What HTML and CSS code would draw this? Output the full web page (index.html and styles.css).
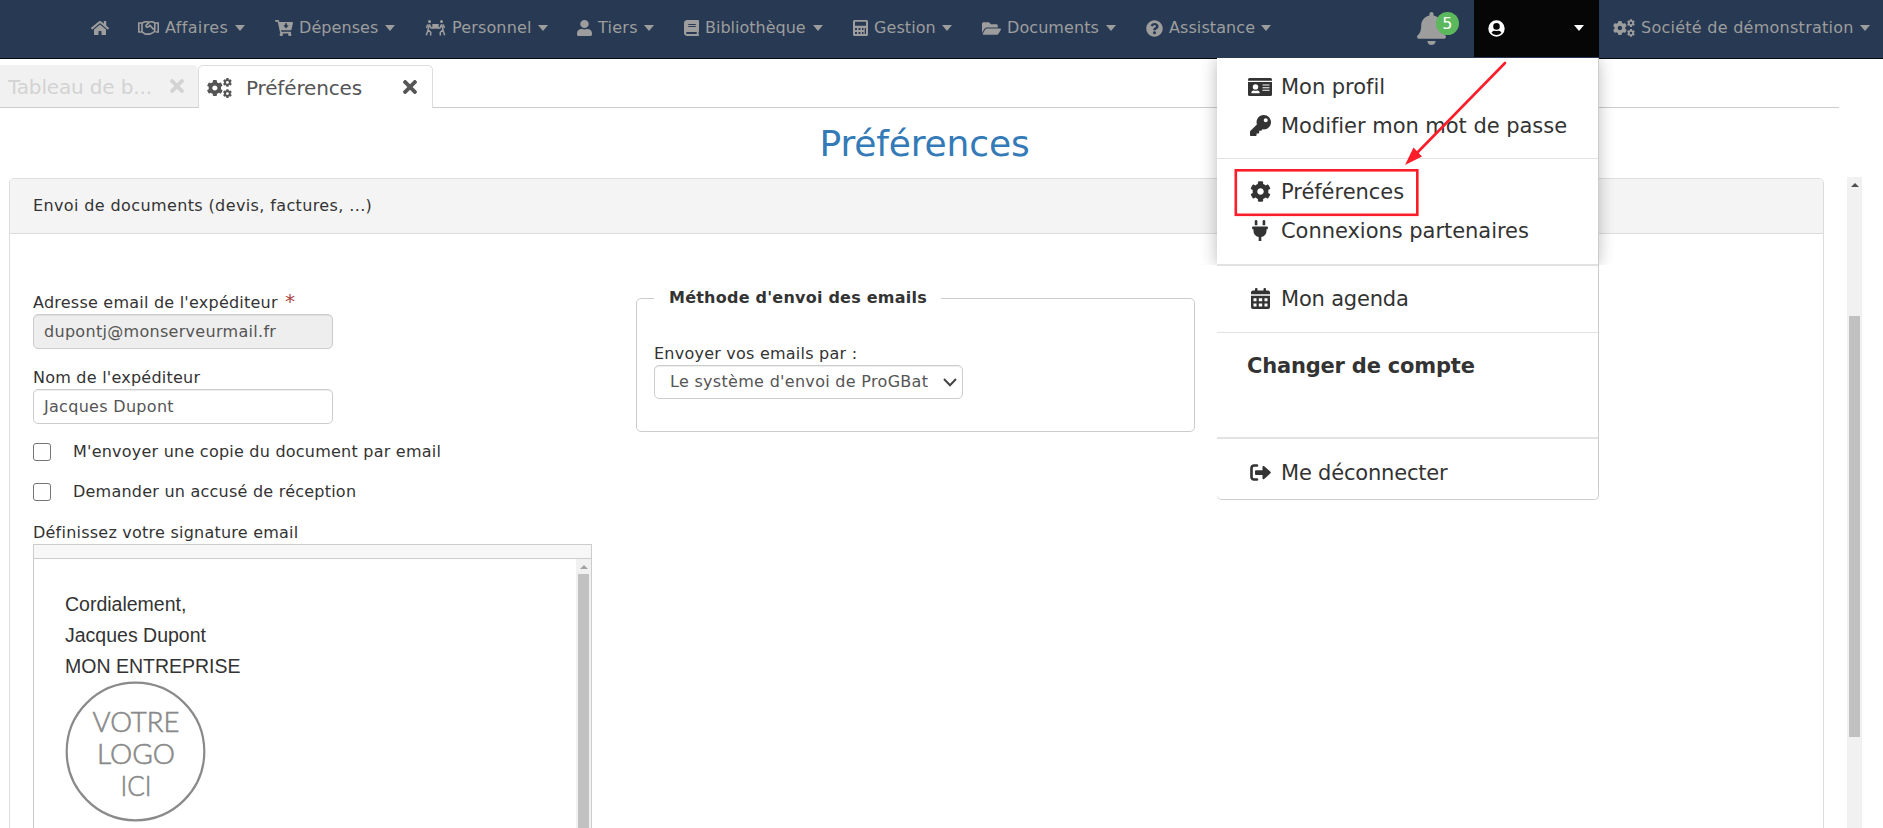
FILE: index.html
```html
<!DOCTYPE html>
<html lang="fr">
<head>
<meta charset="utf-8">
<title>Préférences</title>
<link rel="stylesheet" href="styles.css">
</head>
<body>
<svg class="sprite" width="0" height="0">
  <symbol id="cog" viewBox="0 0 512 512"><path d="M487.4 315.7l-42.6-24.6c4.3-23.2 4.3-47 0-70.2l42.6-24.6c4.9-2.8 7.1-8.6 5.5-14-11.1-35.6-30-67.8-54.7-94.6-3.8-4.1-10-5.1-14.8-2.3L380.8 110c-17.9-15.4-38.5-27.3-60.8-35.1V25.8c0-5.6-3.9-10.5-9.4-11.7-36.7-8.2-74.3-7.8-109.2 0-5.5 1.2-9.4 6.1-9.4 11.7V75c-22.2 7.9-42.8 19.8-60.8 35.1L88.7 85.5c-4.9-2.8-11-1.9-14.8 2.3-24.7 26.7-43.6 58.9-54.7 94.6-1.7 5.4.6 11.2 5.5 14L67.3 221c-4.3 23.2-4.3 47 0 70.2l-42.6 24.6c-4.9 2.8-7.1 8.6-5.5 14 11.1 35.6 30 67.8 54.7 94.6 3.8 4.1 10 5.1 14.8 2.3l42.6-24.6c17.9 15.4 38.5 27.3 60.8 35.1v49.2c0 5.6 3.9 10.5 9.4 11.7 36.7 8.2 74.3 7.8 109.2 0 5.5-1.2 9.4-6.1 9.4-11.7v-49.2c22.2-7.9 42.8-19.8 60.8-35.1l42.6 24.6c4.9 2.8 11 1.9 14.8-2.3 24.7-26.7 43.6-58.9 54.7-94.6 1.5-5.5-.7-11.3-5.6-14.1zM256 336c-44.1 0-80-35.9-80-80s35.9-80 80-80 80 35.9 80 80-35.9 80-80 80z"/></symbol>
  <symbol id="cogs" viewBox="0 0 640 512"><use href="#cog" x="-10" y="45" width="422" height="422"/><use href="#cog" x="405" y="-5" width="235" height="235"/><use href="#cog" x="405" y="282" width="235" height="235"/></symbol>
  <symbol id="times" viewBox="0 80 352 352"><path d="M242.72 256l100.07-100.07c12.28-12.28 12.28-32.19 0-44.48l-22.24-22.24c-12.28-12.28-32.19-12.28-44.48 0L176 189.28 75.93 89.21c-12.28-12.28-32.19-12.28-44.48 0L9.21 111.45c-12.28 12.28-12.28 32.19 0 44.48L109.28 256 9.21 356.07c-12.28 12.28-12.28 32.19 0 44.48l22.24 22.24c12.28 12.28 32.2 12.28 44.48 0L176 322.72l100.07 100.07c12.28 12.28 32.2 12.28 44.48 0l22.24-22.24c12.28-12.28 12.28-32.19 0-44.48L242.72 256z"/></symbol>
</svg>

<header class="navbar">
  <nav class="nav-main">
    <a class="nav-home"><svg width="18" height="16" viewBox="0 0 576 512"><path d="M280.37 148.26L96 300.11V464a16 16 0 0 0 16 16l112.06-.29a16 16 0 0 0 15.92-16V368a16 16 0 0 1 16-16h64a16 16 0 0 1 16 16v95.64a16 16 0 0 0 16 16.05L464 480a16 16 0 0 0 16-16V300L295.67 148.26a12.19 12.19 0 0 0-15.3 0zM571.6 251.47L488 182.56V44.05a12 12 0 0 0-12-12h-56a12 12 0 0 0-12 12v72.61L318.47 43a48 48 0 0 0-61 0L4.34 251.47a12 12 0 0 0-1.6 16.9l25.5 31A12 12 0 0 0 45.15 301l235.22-193.74a12.19 12.19 0 0 1 15.3 0L530.9 301a12 12 0 0 0 16.9-1.6l25.5-31a12 12 0 0 0-1.7-16.93z"/></svg></a>
    <a class="nav-item w-affaires"><svg width="21" height="16" viewBox="0 0 21 16" class="line"><path d="M4.200 3H.8v9h2.600M16.800 3h3.400v9h-2.600M4.200 3L6.800 1.800h2.800l1.200.7 1.600-.7h2.200L16.800 3v8.200M4 3.200v8.600l3.400 2.300h4.200l3-1.200 2.400-1.700M10.800 2.600L8 5.400c-.3 1.700 1.200 2.300 2.600 1.200l1.400-1.200 3.800 4.200"/></svg><span>Affaires</span><i class="caret"></i></a>
    <a class="nav-item w-depenses"><svg width="18" height="16" viewBox="0 0 18 16"><path fill-rule="evenodd" d="M.7 0h2.600c.4 0 .7.300.8.700L4.300 2H17.200c.6 0 .9.500.8 1l-1.500 6.500c-.1.400-.4.700-.8.700H6l.3 1.500h9c.6 0 .9.500.7 1l-.2.700a1.600 1.600 0 1 1-2.200.2H7.500a1.600 1.600 0 1 1-2.200-.2L2.700 1.700H.7C.3 1.700 0 1.400 0 1V.7C0 .3.3 0 .7 0zM10.100 3.300v2H8.300L11 8.500l2.700-3.200h-1.800v-2z"/></svg><span>Dépenses</span><i class="caret"></i></a>
    <a class="nav-item w-personnel"><svg width="21" height="16" viewBox="0 0 20 16"><circle cx="4" cy="1.500" r="1.500"/><circle cx="16" cy="1.500" r="1.500"/><path d="M6.800 4h6.400v4.700H6.800z"/><path class="limb" d="M4 4.300L2.500 9.700l2.700 2.600V15.500M2.600 10L.8 15.300M2.200 4.500L1 8M4 4.500l1.600 3.500h2M16 4.300l1.500 5.400-2.700 2.600V15.500M17.400 10l1.800 5.300M17.800 4.500L19 8M16 4.500l-1.600 3.500h-2"/></svg><span>Personnel</span><i class="caret"></i></a>
    <a class="nav-item w-tiers"><svg width="15" height="16" viewBox="0 0 448 512" preserveAspectRatio="none"><path d="M224 256c70.700 0 128-57.300 128-128S294.700 0 224 0 96 57.300 96 128s57.300 128 128 128zm89.600 32h-16.700c-22.200 10.200-46.900 16-72.900 16s-50.600-5.800-72.900-16h-16.700C60.200 288 0 348.200 0 422.400V464c0 26.500 21.500 48 48 48h352c26.500 0 48-21.500 48-48v-41.600c0-74.200-60.200-134.400-134.400-134.400z"/></svg><span>Tiers</span><i class="caret"></i></a>
    <a class="nav-item w-biblio"><svg width="15" height="16" viewBox="0 0 448 512" preserveAspectRatio="none"><path d="M448 360V24c0-13.300-10.700-24-24-24H96C43 0 0 43 0 96v320c0 53 43 96 96 96h328c13.300 0 24-10.700 24-24v-16c0-7.500-3.500-14.300-8.900-18.700-4.200-15.400-4.200-59.300 0-74.700 5.400-4.300 8.900-11.100 8.900-18.600zM128 134c0-3.300 2.700-6 6-6h212c3.300 0 6 2.700 6 6v20c0 3.300-2.700 6-6 6H134c-3.300 0-6-2.700-6-6v-20zm0 64c0-3.300 2.700-6 6-6h212c3.300 0 6 2.700 6 6v20c0 3.300-2.700 6-6 6H134c-3.300 0-6-2.700-6-6v-20zm253.400 250H96c-17.700 0-32-14.300-32-32 0-17.600 14.400-32 32-32h285.400c-1.900 17.100-1.900 46.900 0 64z"/></svg><span>Bibliothèque</span><i class="caret"></i></a>
    <a class="nav-item w-gestion"><svg width="15" height="16" viewBox="0 0 15 16"><path fill-rule="evenodd" d="M1.500 0h12A1.500 1.500 0 0 1 15 1.500v13a1.500 1.500 0 0 1-1.500 1.500h-12A1.500 1.500 0 0 1 0 14.500v-13A1.500 1.500 0 0 1 1.500 0zM2 1.700v4h11v-4zM2 8v2h2V8zm3.500 0v2h2V8zM9 8v2h1.500V8zm2.700 0v6H13V8zM2 12v2h2v-2zm3.500 0v2h2v-2zM9 12v2h1.500v-2z"/></svg><span>Gestion</span><i class="caret"></i></a>
    <a class="nav-item w-documents"><svg width="19" height="17" viewBox="0 0 576 512"><path d="M572.694 292.093L500.270 416.248A63.997 63.997 0 0 1 444.989 448H45.025c-18.523 0-30.064-20.093-20.731-36.093l72.424-124.155A64 64 0 0 1 152 256h399.964c18.523 0 30.064 20.093 20.730 36.093zM152 224h328v-48c0-26.510-21.490-48-48-48H272l-64-64H48C21.490 64 0 85.490 0 112v278.046l69.077-118.418C86.214 242.250 117.989 224 152 224z"/></svg><span>Documents</span><i class="caret"></i></a>
    <a class="nav-item w-assistance"><svg width="17" height="17" viewBox="0 0 512 512"><path d="M504 256c0 136.997-111.043 248-248 248S8 392.997 8 256C8 119.083 119.043 8 256 8s248 111.083 248 248zM262.655 90c-54.497 0-89.255 22.957-116.549 63.758-3.536 5.286-2.353 12.415 2.715 16.258l34.699 26.310c5.205 3.947 12.621 3.008 16.665-2.122 17.864-22.658 30.113-35.797 57.303-35.797 20.429 0 45.698 13.148 45.698 32.958 0 14.976-12.363 22.667-32.534 33.976C247.128 238.528 216 254.941 216 296v4c0 6.627 5.373 12 12 12h56c6.627 0 12-5.373 12-12v-1.333c0-28.462 83.186-29.647 83.186-106.667 0-58.002-60.165-102-116.531-102zM256 338c-25.365 0-46 20.635-46 46 0 25.364 20.635 46 46 46s46-20.636 46-46c0-25.365-20.635-46-46-46z"/></svg><span>Assistance</span><i class="caret"></i></a>
  </nav>
  <a class="bell"><svg width="29" height="33" viewBox="0 0 448 512"><path d="M224 512c35.320 0 63.970-28.650 63.970-64H160.030c0 35.350 28.650 64 63.970 64zm215.390-149.710c-19.320-20.760-55.470-51.990-55.470-154.290 0-77.700-54.480-139.900-127.940-155.160V32c0-17.670-14.320-32-31.980-32s-31.980 14.330-31.980 32v20.840C118.560 68.100 64.080 130.300 64.080 208c0 102.300-36.150 133.530-55.470 154.290-6 6.450-8.660 14.160-8.610 21.710.11 16.400 12.980 32 32.100 32h383.800c19.120 0 32-15.600 32.100-32 .05-7.550-2.610-15.270-8.610-21.710z"/></svg><b class="badge">5</b></a>
  <a class="account"><svg width="17" height="17" viewBox="0 0 17 17"><path fill-rule="evenodd" d="M8.500.3a8.200 8.200 0 1 0 0 16.400 8.200 8.200 0 0 0 0-16.400zm0 2.800a3.300 3.300 0 1 1 0 6.600 3.300 3.300 0 0 1 0-6.600zM3.500 12.700c.9-1.500 2-2 3.400-2 1 .4 2.200.4 3.200 0 1.400 0 2.500.5 3.400 2a6.500 6.500 0 0 1-10 0z"/></svg><i class="caret"></i></a>
  <a class="company"><svg width="22" height="18"><use href="#cogs"/></svg><span>Société de démonstration</span><i class="caret"></i></a>
</header>

<div class="tabs">
  <div class="tab tab-idle"><span>Tableau de b...</span><svg width="14" height="14"><use href="#times"/></svg></div>
  <div class="tab tab-active"><svg class="tab-icon" width="25" height="20"><use href="#cogs"/></svg><span>Préférences</span><svg class="tab-close" width="14" height="14"><use href="#times"/></svg></div>
</div>

<h1 class="title">Préférences</h1>

<main class="content">
  <section class="panel">
    <div class="panel-head">Envoi de documents (devis, factures, ...)</div>
    <div class="panel-body">
      <div class="col-left">
        <label class="lbl">Adresse email de l'expéditeur <em class="req">*</em></label>
        <div class="field field-off">dupontj@monserveurmail.fr</div>
        <label class="lbl lbl-next">Nom de l'expéditeur</label>
        <div class="field">Jacques Dupont</div>
        <label class="check"><i class="box"></i><span>M'envoyer une copie du document par email</span></label>
        <label class="check"><i class="box"></i><span>Demander un accusé de réception</span></label>
        <label class="lbl lbl-sign">Définissez votre signature email</label>
        <div class="editor">
          <div class="toolbar"></div>
          <div class="editor-main">
            <div class="letter">
              <p>Cordialement,</p><p>Jacques Dupont</p><p>MON ENTREPRISE</p>
              <svg class="logo" width="142" height="142" viewBox="0 0 142 142"><circle cx="70.500" cy="70.500" r="68.800"/><text x="71" y="50.500" textLength="87" lengthAdjust="spacingAndGlyphs">VOTRE</text><text x="71" y="82.500" textLength="78" lengthAdjust="spacingAndGlyphs">LOGO</text><text x="71" y="114.500" textLength="31" lengthAdjust="spacingAndGlyphs">ICI</text></svg>
            </div>
            <div class="mini-scroll"><i class="up up-pale"></i><i class="mini-thumb"></i></div>
          </div>
        </div>
      </div>
      <fieldset class="method">
        <legend>Méthode d'envoi des emails</legend>
        <label class="lbl">Envoyer vos emails par :</label>
        <div class="field select"><span>Le système d'envoi de ProGBat</span><svg width="14" height="9" viewBox="0 0 14 9"><path d="M1 1l6 6.200L13 1"/></svg></div>
      </fieldset>
    </div>
  </section>
  <div class="scroll"><i class="up"></i><i class="thumb"></i></div>
</main>

<div class="shade"></div>
<div class="menu">
  <ul class="group g1">
    <li><svg width="24" height="18" viewBox="0 0 24 18"><path fill-rule="evenodd" d="M0 2.800V1.500A1.500 1.500 0 0 1 1.500 0h21A1.500 1.500 0 0 1 24 1.500v1.300zM0 4h24v12.500a1.500 1.500 0 0 1-1.500 1.500h-21A1.500 1.500 0 0 1 0 16.500zM7.500 6.200a2.700 2.700 0 1 0 0 5.400 2.700 2.700 0 0 0 0-5.400zM3.300 15.200h8.400c0-2-1-2.800-2.400-2.800-1.200.5-2.400.5-3.600 0-1.400 0-2.400.8-2.400 2.800zM14.500 6.500v1h7v-1zm0 2.700v1h7v-1zm0 2.600v1h7v-1z"/></svg><span>Mon profil</span></li>
    <li><svg width="21" height="21" viewBox="0 0 512 512"><path d="M512 176.001C512 273.203 433.202 352 336 352c-11.220 0-22.190-1.062-32.827-3.069l-24.012 27.014A23.999 23.999 0 0 1 261.223 384H224v40c0 13.255-10.745 24-24 24h-40v40c0 13.255-10.745 24-24 24H24c-13.255 0-24-10.745-24-24v-78.059c0-6.365 2.529-12.470 7.029-16.971l161.802-161.802C163.108 213.814 160 195.271 160 176 160 78.798 238.797.001 335.999 0 433.488-.001 512 78.511 512 176.001zM336 128c0 26.510 21.490 48 48 48s48-21.490 48-48-21.490-48-48-48-48 21.490-48 48z"/></svg><span>Modifier mon mot de passe</span></li>
  </ul>
  <ul class="group g2">
    <li><svg width="21" height="21"><use href="#cog"/></svg><span>Préférences</span></li>
    <li><svg width="16" height="21" viewBox="0 0 384 512"><path d="M320,32a32,32,0,0,0-64,0v96h64Zm48,128H16A16,16,0,0,0,0,176v32a16,16,0,0,0,16,16H32v32A160.070,160.070,0,0,0,160,412.800V512h64V412.800A160.070,160.070,0,0,0,352,256V224h16a16,16,0,0,0,16-16V176A16,16,0,0,0,368,160ZM128,32a32,32,0,0,0-64,0v96h64Z"/></svg><span>Connexions partenaires</span></li>
  </ul>
  <ul class="group g3">
    <li><svg width="19" height="21" viewBox="0 0 19 21"><path fill-rule="evenodd" d="M4 1a1 1 0 0 1 1-1h.5a1 1 0 0 1 1 1v1.500h6V1a1 1 0 0 1 1-1h.5a1 1 0 0 1 1 1v1.500h2A2 2 0 0 1 19 4.500V6.300H0V4.500a2 2 0 0 1 2-2h2zM0 7.800h19V19a2 2 0 0 1-2 2H2a2 2 0 0 1-2-2zM2.500 10.300v3h3v-3zm5.300 0v3h3.400v-3zm5.700 0v3h3v-3zM2.500 15.500v3h3v-3zm5.300 0v3h3.400v-3zm5.700 0v3h3v-3z"/></svg><span>Mon agenda</span></li>
  </ul>
  <div class="group g4">Changer de compte</div>
  <ul class="group g5">
    <li><svg width="21" height="17" viewBox="0 0 21 17"><path class="door" d="M7 1.500H4A2.500 2.500 0 0 0 1.500 4v9A2.500 2.500 0 0 0 4 15.500h3"/><path d="M6 6.200h6.500V3c0-1 1-1.400 1.700-.8l6.300 5.500c.4.400.4 1 0 1.500L14.200 15c-.7.600-1.700.2-1.700-.8V11H6a1 1 0 0 1-1-1V7.200a1 1 0 0 1 1-1z"/></svg><span>Me déconnecter</span></li>
  </ul>
</div>
<svg class="marks" width="300" height="170" viewBox="1230 56 300 170"><rect x="1235.800" y="170.300" width="181.500" height="44.500"/><path class="shaft" d="M1505 63L1414 156"/><path class="head" d="M1405 165l8.500-17.500 8.500 9z"/></svg>
</body>
</html>
```
FILE: styles.css
```css
* { box-sizing: border-box; }
body { margin: 0; height: 828px; overflow: hidden; position: relative; background: #fff; color: #333; font: 16px/22px Verdana, "DejaVu Sans", sans-serif; letter-spacing: .23px; }
ul, p, h1 { margin: 0; padding: 0; list-style: none; }
svg { display: block; flex: none; fill: currentColor; }
.sprite { position: absolute; }

.navbar { display: flex; height: 59px; background: #283a53; border-bottom: 1px solid #05080d; color: #9d9d9d; white-space: nowrap; letter-spacing: .08px; }
.nav-main { display: flex; width: 1417px; padding-left: 91px; height: 56px; align-items: center; }
.nav-home { width: 47px; }
.nav-item { display: flex; align-items: center; gap: 6px; margin-right: 30px; }
.caret { width: 0; height: 0; margin-left: auto; border: 5px solid transparent; border-top: 6px solid currentColor; border-bottom: 0; }
.w-affaires { width: 107px; letter-spacing: .35px; }
.w-depenses { width: 120px; }
.w-personnel { width: 123px; margin-right: 29px; letter-spacing: .15px; }
.w-tiers { width: 77px; letter-spacing: .25px; }
.w-biblio { width: 139px; letter-spacing: 0; }
.w-gestion { width: 99px; }
.w-documents { width: 134px; }
.w-assistance { width: 125px; margin-right: 0; }
.nav-item .caret { margin-left: auto; margin-right: 0; }
.nav-item span { margin-right: -6px; }
.line { fill: none; stroke: currentColor; stroke-width: 1.6; }
.limb { fill: none; stroke: currentColor; stroke-width: 1.5; }
.bell { position: relative; width: 57px; padding-top: 12px; }
.badge { position: absolute; left: 19px; top: 12px; width: 23px; height: 23px; border-radius: 50%; background: #5cb85c; color: #fff; font-weight: 400; font-size: 16px; line-height: 24px; text-align: center; }
.account { display: flex; align-items: center; width: 125px; height: 57px; padding: 0 15px 1px 14px; background: #060606; color: #fff; }
.company { display: flex; align-items: center; gap: 6px; width: 270px; height: 56px; margin-left: 14px; letter-spacing: .26px; }
.company .caret { margin-left: 0; }

.tabs { display: flex; width: 1839px; height: 43px; margin-top: 6px; border-bottom: 1px solid #ccc; font-size: 20px; color: #555; letter-spacing: -.15px; }
.tab { display: flex; align-items: center; height: 43px; }
.tab-idle { width: 198px; height: 42px; padding: 1px 14px 0 8px; background: #f1f1f1; border-radius: 0 5px 0 0; color: #d3d3d3; justify-content: space-between; }
.tab-idle svg { margin-bottom: 2px; }
.tab-active { width: 235px; padding: 1px 15px 0 8px; border: 1px solid #ddd; border-bottom: 0; border-radius: 5px 5px 0 0; background: #fff; }
.tab-icon { margin-right: 14px; }
.tab-close { margin-left: auto; margin-bottom: 1px; }

.title { width: 1849px; height: 70px; padding-top: 16px; text-align: center; font-size: 36px; font-weight: 400; line-height: 40px; letter-spacing: -.15px; color: #337ab7; }

.content { display: flex; align-items: flex-start; height: 651px; margin-top: -1px; overflow: hidden; }
.panel { width: 1815px; height: 700px; margin: 1px 0 0 9px; border: 1px solid #ddd; border-radius: 5px; }
.panel-head { height: 55px; padding: 16px 23px; background: #f4f4f4; border-bottom: 1px solid #ddd; border-radius: 4px 4px 0 0; letter-spacing: .38px; }
.panel-body { display: flex; padding-left: 23px; }
.col-left { width: 560px; padding-top: 58px; }
.lbl { display: block; height: 22px; }
.lbl-next { margin-top: 18px; }
.lbl-sign { margin-top: 19px; }
.req { margin-left: 2px; font-style: normal; font-size: 20px; line-height: 0; color: #a94442; }
.field { width: 300px; height: 35px; padding: 6px 10px; border: 1px solid #ccc; border-radius: 5px; background: #fff; color: #555; box-shadow: inset 0 1px 1px rgba(0,0,0,.075); white-space: nowrap; letter-spacing: .3px; }
.field-off { background: #eee; }
.check { display: flex; align-items: center; gap: 22px; margin-top: 17px; }
.check + .check { margin-top: 18px; }
.box { width: 18px; height: 18px; border: 1.5px solid #767676; border-radius: 3px; }
.editor { width: 559px; height: 400px; border: 1px solid #ccc; }
.toolbar { height: 14px; border-bottom: 1px solid #ccc; background: #f7f7f7; }
.editor-main { display: flex; height: 385px; justify-content: space-between; }
.letter { padding: 30px 0 0 31px; font: 19.500px/30.800px "Liberation Sans", Arial, sans-serif; letter-spacing: 0; }
.logo { fill: none; }
.logo circle { stroke: #8a8a8a; stroke-width: 2.200; }
.logo text { fill: #8a8a8a; stroke: #8a8a8a; stroke-width: .6; font: 300 28px Lato, sans-serif; text-anchor: middle; }
.mini-scroll { width: 15px; padding: 6px 2px 0; background: #f1f1f1; }
.up { display: block; width: 0; height: 0; margin: 0 auto; border: 4px solid transparent; border-bottom: 4px solid #505050; border-top: 0; }
.up-pale { border-bottom-color: #a3a3a3; }
.mini-thumb { display: block; height: 380px; margin-top: 5px; background: #c1c1c1; }

.method { width: 559px; height: 145px; margin: 53px 0 0 43px; padding: 34px 17px 0; border: 1px solid #ccc; border-radius: 5px; }
.method legend { width: 287px; padding: 0 15px; font-weight: 700; white-space: nowrap; }
.select { display: flex; align-items: center; justify-content: space-between; width: 309px; height: 34px; padding: 0 5px 0 15px; }
.select svg { fill: none; stroke: #444; stroke-width: 2; }

.scroll { width: 15px; height: 651px; margin-left: 23px; padding: 6px 2px 0; background: #f1f1f1; }
.thumb { display: block; height: 421px; margin-top: 129px; background: #c1c1c1; }

.shade { position: absolute; left: 1217px; top: 59px; width: 381px; height: 206px; box-shadow: 0 0 16px rgba(0,0,0,.28); clip-path: inset(0 -16px 0 -16px); }
.menu { position: absolute; left: 1217px; top: 58px; width: 382px; height: 442px; background: #fff; border: 1px solid #ccc; border-width: 0 1px 1px 0; border-radius: 0 0 5px 5px; font-size: 21px; letter-spacing: -.04px; white-space: nowrap; }
.group { border-bottom: 1px solid #e2e2e2; }
.group li { display: grid; grid-template-columns: 24px 1fr; align-items: center; column-gap: 9px; height: 39px; padding-left: 31px; }
.group li svg { justify-self: center; }
.g1 { height: 101px; padding-top: 9px; }
.g2 { height: 107px; padding-top: 13px; border-bottom-width: 2px; }
.g3 { height: 67px; padding-top: 13px; letter-spacing: -.2px; }
.g4 { height: 106px; padding: 22px 0 0 30px; border-bottom-width: 2px; font-weight: 700; letter-spacing: -.2px; }
.g5 { padding-top: 14px; border: 0; letter-spacing: -.2px; }
.door { fill: none; stroke: currentColor; stroke-width: 2.600; stroke-linecap: round; }

.marks { position: absolute; left: 1230px; top: 56px; fill: none; stroke: #fc1d2b; stroke-width: 2.600; }
.marks .head { fill: #fc1d2b; stroke: none; }
.marks .shaft { stroke-linecap: round; }
```
